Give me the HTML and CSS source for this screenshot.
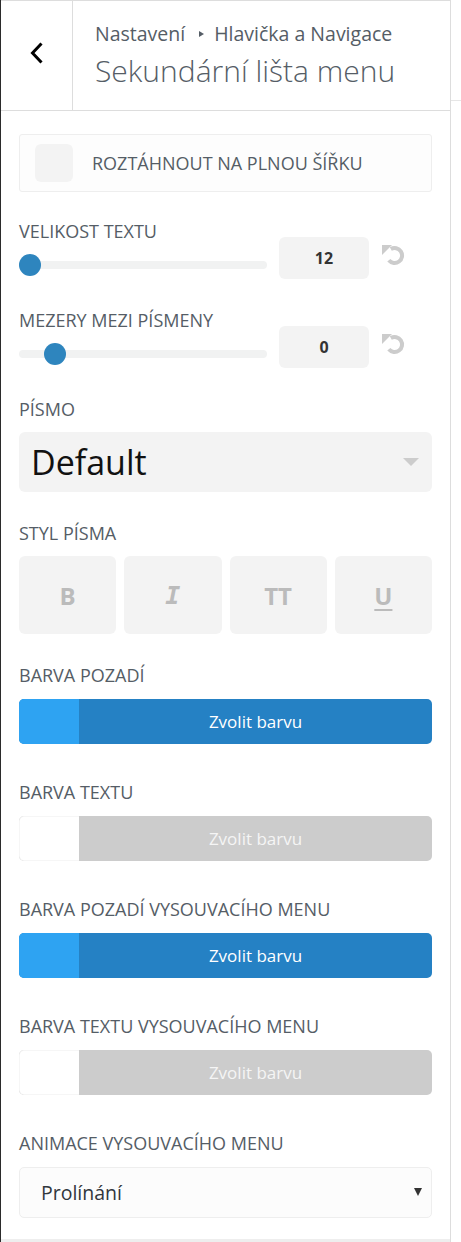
FILE: index.html
```html
<!DOCTYPE html>
<html lang="cs">
<head>
    <meta charset="UTF-8">
    <meta name="viewport" content="width=device-width, initial-scale=1.0">
    <title>Sekundární lišta menu</title>
    <link rel="stylesheet" href="styles.css">
</head>
<body>

    <div class="customizer">
        <div class="panel">
            <div class="panel-header">
                <button class="back-button" aria-label="Zpět">
                    <svg width="14" height="22" viewBox="0 0 14 22">
                        <polyline points="11.5,1.5 2.5,11 11.5,20.5" fill="none" stroke="#000" stroke-width="3"/>
                    </svg>
                </button>
                <div class="panel-title">
                    <span class="breadcrumb">Nastavení<span class="crumb-sep"></span>Hlavička a Navigace</span>
                    <h2 class="section-title">Sekundární lišta menu</h2>
                </div>
            </div>

            <div class="panel-body">
                <label class="checkbox-card">
                    <span class="checkbox-box"></span>
                    <span class="checkbox-text">Roztáhnout na plnou šířku</span>
                </label>

                <div class="control control-range">
                    <span class="control-label">Velikost textu</span>
                    <input class="range-input" type="range" min="12" max="30" value="12">
                    <span class="range-value">12</span>
                    <svg class="range-reset" width="24" height="24" viewBox="0 0 24 24">
                        <path d="M9.8 6 A7.5 7.5 0 1 1 7.8 17.3" fill="none" stroke="#ccc" stroke-width="4"/>
                        <polygon points="1,2 11,2 1,12" fill="#ccc"/>
                    </svg>
                </div>

                <div class="control control-range">
                    <span class="control-label">Mezery mezi písmeny</span>
                    <input class="range-input" type="range" min="-1" max="8" value="0">
                    <span class="range-value">0</span>
                    <svg class="range-reset" width="24" height="24" viewBox="0 0 24 24">
                        <path d="M9.8 6 A7.5 7.5 0 1 1 7.8 17.3" fill="none" stroke="#ccc" stroke-width="4"/>
                        <polygon points="1,2 11,2 1,12" fill="#ccc"/>
                    </svg>
                </div>

                <div class="control">
                    <span class="control-label">Písmo</span>
                    <div class="font-select">
                        <span>Default</span>
                        <span class="font-select-arrow"></span>
                    </div>
                </div>

                <div class="control">
                    <span class="control-label">Styl písma</span>
                    <div class="font-styles">
                        <button class="style-button">B</button>
                        <button class="style-button style-italic">I</button>
                        <button class="style-button">TT</button>
                        <button class="style-button style-underline">U</button>
                    </div>
                </div>

                <div class="control control-color">
                    <span class="control-label">Barva pozadí</span>
                    <button class="color-picker">
                        <span class="color-swatch"></span>
                        <span class="color-label">Zvolit barvu</span>
                    </button>
                </div>

                <div class="control control-color">
                    <span class="control-label">Barva textu</span>
                    <button class="color-picker color-empty">
                        <span class="color-swatch"></span>
                        <span class="color-label">Zvolit barvu</span>
                    </button>
                </div>

                <div class="control control-color">
                    <span class="control-label">Barva pozadí vysouvacího menu</span>
                    <button class="color-picker">
                        <span class="color-swatch"></span>
                        <span class="color-label">Zvolit barvu</span>
                    </button>
                </div>

                <div class="control control-color">
                    <span class="control-label">Barva textu vysouvacího menu</span>
                    <button class="color-picker color-empty">
                        <span class="color-swatch"></span>
                        <span class="color-label">Zvolit barvu</span>
                    </button>
                </div>

                <div class="control control-last">
                    <span class="control-label">Animace vysouvacího menu</span>
                    <div class="select-wrap">
                        <select class="select-native">
                            <option>Prolínání</option>
                            <option>Posun</option>
                        </select>
                    </div>
                </div>
            </div>

            <div class="panel-footer"></div>
        </div>

        <div class="preview"></div>
    </div>

</body>
</html>
```

FILE: styles.css
```css
* {
    box-sizing: border-box;
}
body {
    margin: 0;
    font-family: "Open Sans", sans-serif;
    background: #fff;
}
.customizer {
    display: flex;
    min-height: 1242px;
}
.panel {
    width: 451px;
    border-left: 1px solid #2b2b2b;
    border-right: 1px solid #ddd;
    display: flex;
    flex-direction: column;
}
.preview {
    flex: 1;
    margin-top: 100px;
    border-top: 1px solid #e6e6e6;
}

/* header */
.panel-header {
    display: flex;
    height: 111px;
    border-top: 1px solid #ddd;
    border-bottom: 1px solid #ddd;
}
.back-button {
    width: 72px;
    padding: 0 0 5px;
    border: 0;
    border-right: 1px solid #ddd;
    background: #fff;
    display: flex;
    align-items: center;
    justify-content: center;
}
.panel-title {
    padding: 20px 0 0 22px;
    color: #555d66;
}
.breadcrumb {
    display: block;
    font-size: 19.5px;
    line-height: 26px;
}
.crumb-sep {
    display: inline-block;
    margin: 0 10px 0 14px;
    border-left: 5px solid #555d66;
    border-top: 3.5px solid transparent;
    border-bottom: 3.5px solid transparent;
    vertical-align: 4px;
}
.section-title {
    margin: 6px 0 0;
    font-size: 30px;
    font-weight: 300;
    line-height: 36px;
}

/* body */
.panel-body {
    padding: 23px 18px 21px;
}
.panel-footer {
    flex: 1;
    background: #eee;
}
.checkbox-card {
    display: flex;
    align-items: center;
    gap: 19px;
    padding: 9px 15px;
    margin-bottom: 27px;
    border: 1px solid #eee;
    border-radius: 3px;
    background: #fdfdfd;
}
.checkbox-box {
    width: 38px;
    height: 38px;
    border-radius: 6px;
    background: #f3f3f3;
}
.checkbox-text,
.control-label {
    font-size: 18px;
    line-height: 24px;
    text-transform: uppercase;
    color: #555d66;
}
.control {
    margin-bottom: 29px;
}
.control-label {
    display: block;
    margin-bottom: 11px;
}
.control-color {
    margin-bottom: 36px;
}
.control-color .control-label,
.control-last .control-label {
    margin-bottom: 12px;
}
.control-last {
    margin-bottom: 0;
}

/* sliders */
.control-range {
    display: grid;
    grid-template-columns: 248px 90px 24px;
    column-gap: 12px;
}
.control-range .control-label {
    grid-column: 1;
    grid-row: 1;
    margin: 0;
}
.range-input {
    grid-column: 1;
    grid-row: 2;
    -webkit-appearance: none;
    appearance: none;
    width: 248px;
    height: 22px;
    margin: 7px 0 0;
    background: transparent;
}
.range-input::-webkit-slider-runnable-track {
    height: 8px;
    border-radius: 4px;
    background: #f1f2f2;
}
.range-input::-webkit-slider-thumb {
    -webkit-appearance: none;
    width: 22px;
    height: 22px;
    margin-top: -7px;
    border: 0;
    border-radius: 50%;
    background: #2e85be;
}
.range-value {
    grid-column: 2;
    grid-row: 1 / span 2;
    height: 42px;
    margin-top: 18px;
    border-radius: 6px;
    background: #f3f3f3;
    display: flex;
    align-items: center;
    justify-content: center;
    font-size: 16px;
    font-weight: 700;
    color: #333;
}
.range-reset {
    grid-column: 3;
    grid-row: 1 / span 2;
    margin-top: 24px;
}

/* font */
.font-select {
    display: flex;
    align-items: center;
    justify-content: space-between;
    height: 60px;
    padding: 0 13px 0 12px;
    border-radius: 6px;
    background: #f3f3f3;
    font-size: 34px;
    color: #111;
}
.font-select-arrow {
    border-left: 8.5px solid transparent;
    border-right: 8.5px solid transparent;
    border-top: 8px solid #ccc;
}
.font-styles {
    display: grid;
    grid-template-columns: repeat(4, 1fr);
    gap: 8px;
}
.style-button {
    height: 78px;
    padding: 0;
    border: 0;
    border-radius: 6px;
    background: #f3f3f3;
    font-family: "Open Sans", sans-serif;
    font-size: 24px;
    font-weight: 700;
    color: #bbb;
}
.style-italic {
    font-family: "DejaVu Sans Mono", monospace;
    font-style: italic;
    font-size: 25px;
}
.style-underline {
    text-decoration: underline;
    text-decoration-thickness: 2px;
    text-underline-offset: 4px;
}

/* colour pickers */
.color-picker {
    display: flex;
    width: 100%;
    height: 45px;
    padding: 0;
    border: 0;
    border-radius: 5px;
    overflow: hidden;
    background: #2581c4;
    font-family: "Open Sans", sans-serif;
    font-size: 17px;
    color: #fff;
}
.color-swatch {
    width: 60px;
    background: #2ea3f2;
}
.color-label {
    flex: 1;
    display: flex;
    align-items: center;
    justify-content: center;
}
.color-empty {
    background: #ccc;
    color: #f5f5f5;
}
.color-empty .color-swatch {
    background: #fff;
    border: 1px solid #f6f6f6;
    border-right: 0;
    border-radius: 5px 0 0 5px;
}

/* animation select */
.select-wrap {
    position: relative;
}
.select-wrap::after {
    content: "";
    position: absolute;
    right: 10px;
    top: 21px;
    border-left: 4px solid transparent;
    border-right: 4px solid transparent;
    border-top: 8px solid #333;
}
.select-native {
    -webkit-appearance: none;
    appearance: none;
    width: 100%;
    height: 51px;
    padding: 0 0 0 21px;
    border: 1px solid #eee;
    border-radius: 5px;
    background: #fcfcfc;
    font-family: "Open Sans", sans-serif;
    font-size: 19.5px;
    color: #32373c;
}
```
